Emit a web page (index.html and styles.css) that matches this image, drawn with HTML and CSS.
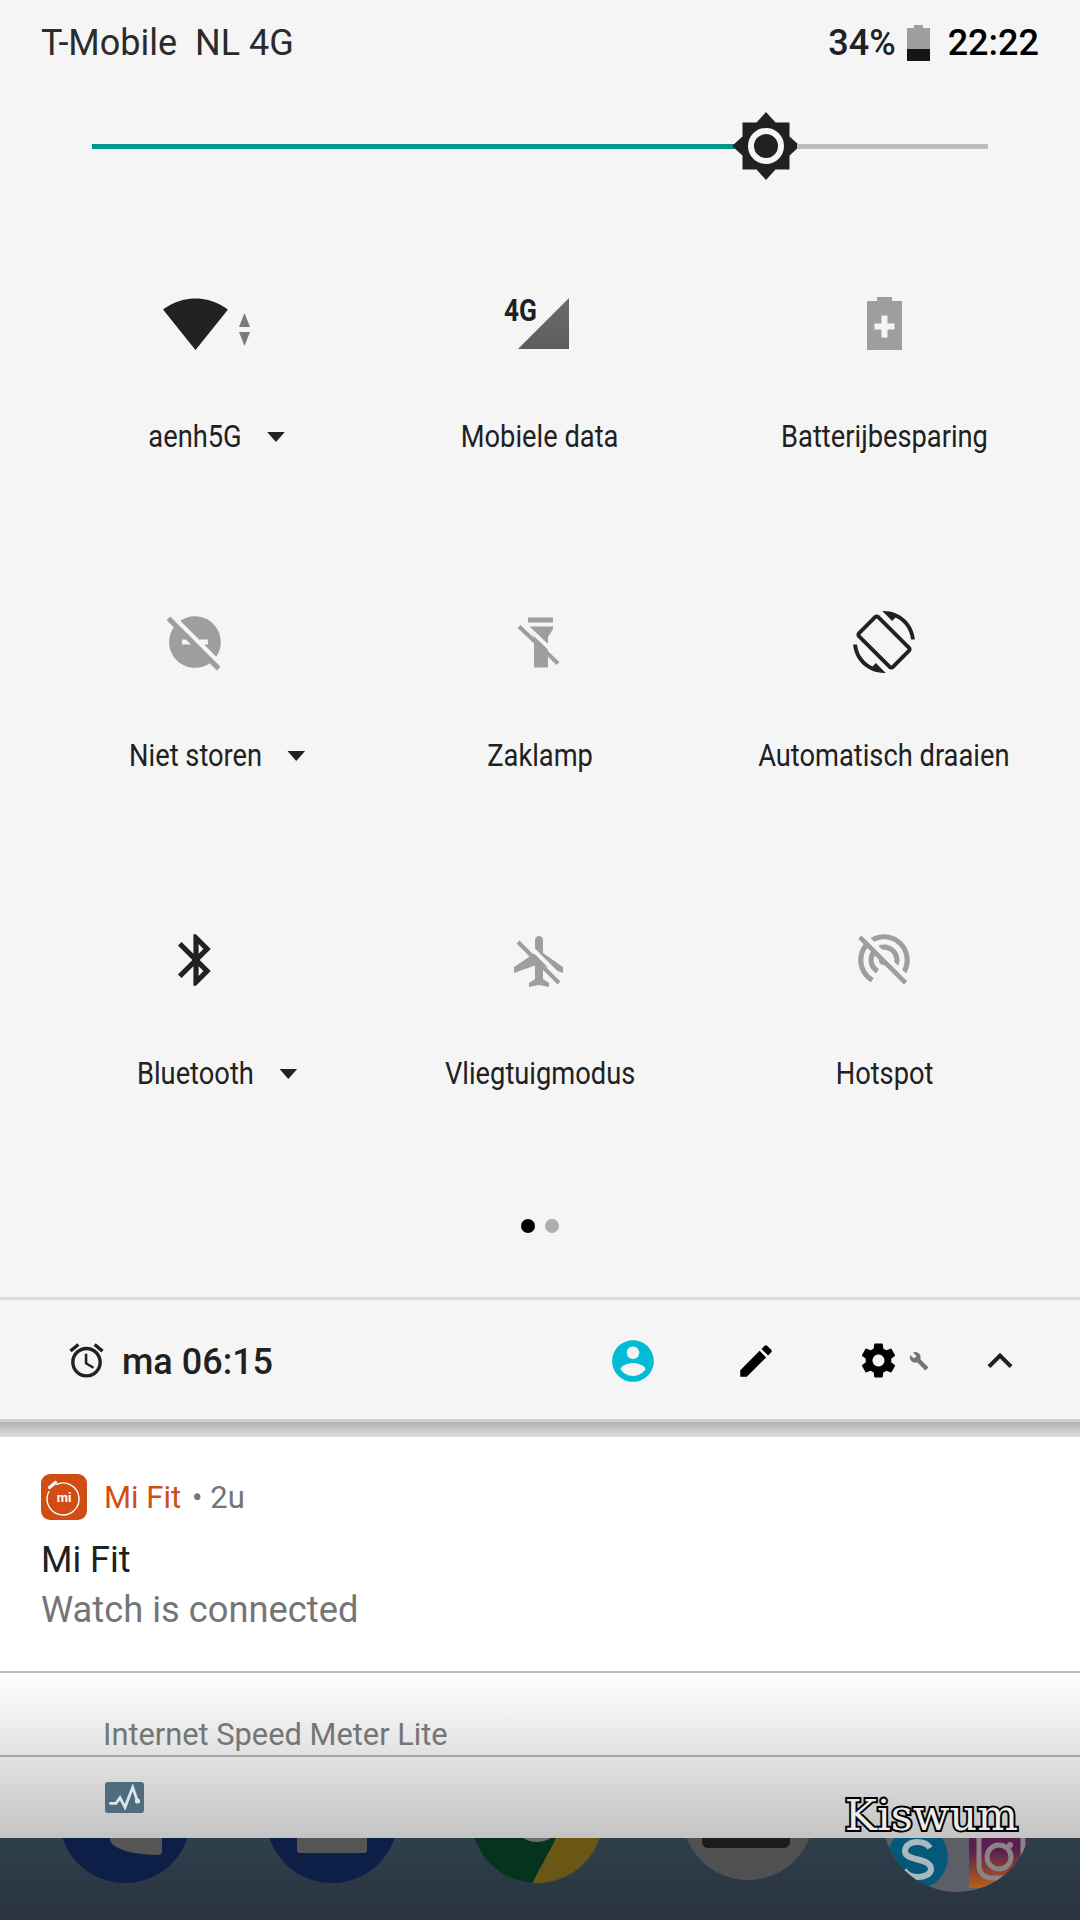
FILE: index.html
```html
<!DOCTYPE html>
<html lang="nl">
<head>
    <meta charset="UTF-8">
    <meta name="viewport" content="width=device-width, initial-scale=1.0">
    <title>Snelle instellingen</title>
    <link rel="stylesheet" href="styles.css">
</head>
<body>
    <div class="panel">
        <div class="status-bar">
            <span class="carrier">T-Mobile&nbsp; NL 4G</span>
            <span class="battery-level">34%</span>
            <svg class="battery-icon" viewBox="0 0 23 36">
                <path d="M7 0h9v3h7v21H0V3h7z" fill="#9e9e9e"/>
                <rect y="24" width="23" height="12" fill="#161616"/>
            </svg>
            <span class="clock">22:22</span>
        </div>

        <div class="slider">
            <div class="slider-fill"></div>
            <svg class="slider-thumb" viewBox="0 0 68 68">
                <path d="M34 0l9.500 10.500H57.500V24.500L68 34 57.500 43.500V57.500H43.500L34 68 24.500 57.500H10.500V43.500L0 34 10.500 24.500V10.500H24.500z" fill="#212121"/>
                <circle cx="34" cy="34" r="15" fill="#212121" stroke="#f5f5f5" stroke-width="6"/>
            </svg>
            <div class="slider-rest"></div>
        </div>

        <div class="tiles">
            <div class="tile">
                <div class="tile-icon">
                    <svg class="wifi" viewBox="0 0 24 24"><path d="M12.010 21.490L23.640 7c-.45-.34-4.930-4-11.640-4C5.280 3 .81 6.660.36 7l11.630 14.490.01.01.01-.01z" fill="#212121"/></svg>
                    <svg class="wifi-arrows" viewBox="0 0 11 33"><path d="M5.500 0L11 14H0z" fill="#7a7a7a"/><path d="M0 19h11L5.500 33z" fill="#7a7a7a"/></svg>
                </div>
                <div class="tile-label has-menu">aenh5G</div>
            </div>
            <div class="tile">
                <div class="tile-icon">
                    <svg class="signal" viewBox="0 0 51 51"><defs><linearGradient id="signalFill" x1="0" y1="0" x2="0" y2="1"><stop offset="0" stop-color="#6b6b6b"/><stop offset="1" stop-color="#5c5c5c"/></linearGradient></defs><path d="M51 0V51H0z" fill="url(#signalFill)"/></svg>
                    <span class="signal-text">4G</span>
                </div>
                <div class="tile-label">Mobiele data</div>
            </div>
            <div class="tile">
                <div class="tile-icon">
                    <svg class="saver" viewBox="0 0 35 53"><path d="M10 0h15v4h10v49H0V4h10z" fill="#9e9e9e"/><path d="M14.500 18.500h6v8h7v6h-7v8h-6v-8h-7v-6h7z" fill="#f5f5f5"/></svg>
                </div>
                <div class="tile-label">Batterijbesparing</div>
            </div>

            <div class="tile">
                <div class="tile-icon">
                    <svg class="icon-62" viewBox="0 0 24 24"><path d="M17 11v2h-1.460l4.680 4.680C21.340 16.070 22 14.110 22 12c0-5.520-4.480-10-10-10-2.110 0-4.070.66-5.680 1.780L13.540 11H17zM2.410 2.130L1 3.540l2.780 2.780C2.660 7.930 2 9.890 2 12c0 5.520 4.480 10 10 10 2.110 0 4.070-.66 5.680-1.780L20.460 23l1.410-1.410L2.410 2.130zM7 13v-2h1.460l2 2H7z" fill="#9e9e9e"/></svg>
                </div>
                <div class="tile-label has-menu">Niet storen</div>
            </div>
            <div class="tile">
                <div class="tile-icon">
                    <svg class="icon-62" viewBox="0 0 62 62">
                        <path d="M19 6.500h25v5H19zM19 15.500h25V18l-5 8v30.500H25V26l-6-8z" fill="#9e9e9e"/>
                        <path d="M14 12l39 37" stroke="#f5f5f5" stroke-width="4"/>
                        <path d="M10 15.500l39 37" stroke="#9e9e9e" stroke-width="4"/>
                    </svg>
                </div>
                <div class="tile-label">Zaklamp</div>
            </div>
            <div class="tile">
                <div class="tile-icon">
                    <svg class="icon-62" viewBox="0 0 24 24"><path d="M16.480 2.520c3.270 1.550 5.610 4.720 5.970 8.480h1.500C23.440 4.840 18.290 0 12 0l-.66.03 3.810 3.810 1.330-1.320zm-6.250-.77c-.59-.59-1.540-.59-2.120 0L1.750 8.110c-.59.59-.59 1.540 0 2.120l12.020 12.020c.59.59 1.540.59 2.120 0l6.360-6.360c.59-.59.59-1.540 0-2.120L10.230 1.750zm4.600 19.440L2.810 9.170l6.360-6.360 12.020 12.020-6.360 6.360zm-7.310.29C4.250 19.940 1.910 16.760 1.550 13H.05C.56 19.160 5.710 24 12 24l.66-.03-3.810-3.810-1.330 1.320z" fill="#212121"/></svg>
                </div>
                <div class="tile-label">Automatisch draaien</div>
            </div>

            <div class="tile">
                <div class="tile-icon">
                    <svg class="icon-62 bluetooth" viewBox="0 0 24 24"><path d="M17.710 7.710L12 2h-1v7.590L6.410 5 5 6.410 10.590 12 5 17.590 6.410 19 11 14.410V22h1l5.710-5.710-4.300-4.290 4.300-4.290zM13 5.830l1.880 1.880L13 9.590V5.830zm1.880 10.460L13 18.170v-3.760l1.880 1.880z" fill="#212121"/></svg>
                </div>
                <div class="tile-label has-menu">Bluetooth</div>
            </div>
            <div class="tile">
                <div class="tile-icon">
                    <svg class="icon-62" viewBox="0 0 62 62">
                        <path d="M30 7c-2.200 0-4 1.800-4 4v13L5 38v6l21-7.500V50l-6 4v4l10-2 10 2v-4l-6-4V36.500L54 44v-6L34 24V11c0-2.200-1.800-4-4-4z" fill="#9e9e9e"/>
                        <path d="M13 9.500l41 41" stroke="#f5f5f5" stroke-width="4"/>
                        <path d="M9 13l41 41" stroke="#9e9e9e" stroke-width="4"/>
                    </svg>
                </div>
                <div class="tile-label">Vliegtuigmodus</div>
            </div>
            <div class="tile">
                <div class="tile-icon">
                    <svg class="icon-62" viewBox="0 0 24 24"><path d="M17.560 14.240c.28-.69.44-1.450.44-2.240 0-3.310-2.690-6-6-6-.79 0-1.550.16-2.240.44l1.620 1.620c.2-.03.41-.06.62-.06 2.210 0 4 1.790 4 4 0 .21-.02.42-.05.63l1.610 1.610zM12 4c4.420 0 8 3.580 8 8 0 1.350-.35 2.620-.95 3.740l1.470 1.470C21.460 15.690 22 13.910 22 12c0-5.520-4.480-10-10-10-1.910 0-3.690.55-5.210 1.470l1.460 1.460C9.370 4.340 10.650 4 12 4zM3.270 2.500L2 3.770l2.100 2.100C2.790 7.570 2 9.690 2 12c0 3.700 2.010 6.920 4.990 8.650l1-1.730C5.610 17.530 4 14.960 4 12c0-1.760.57-3.380 1.530-4.690l1.430 1.440C6.360 9.680 6 10.800 6 12c0 2.220 1.210 4.150 3 5.190l1-1.740c-1.190-.7-2-1.970-2-3.450 0-.65.17-1.250.44-1.790l1.580 1.580L10 12c0 1.100.9 2 2 2l.21-.02.01.01 7.510 7.510L21 20.230 4.270 3.500l-1-1z" fill="#9e9e9e"/></svg>
                </div>
                <div class="tile-label">Hotspot</div>
            </div>
        </div>

        <div class="page-dots">
            <span class="dot active"></span>
            <span class="dot"></span>
        </div>

        <div class="footer">
            <svg class="alarm-icon" viewBox="0 0 24 24"><path d="M22 5.720l-4.600-3.860-1.290 1.530 4.600 3.860L22 5.720zM7.880 3.390L6.600 1.860 2 5.710l1.290 1.530 4.590-3.850zM12.500 8H11v6l4.750 2.850.75-1.230-4-2.370V8zM12 4c-4.970 0-9 4.030-9 9s4.020 9 9 9c4.970 0 9-4.030 9-9s-4.030-9-9-9zm0 16c-3.870 0-7-3.130-7-7s3.130-7 7-7 7 3.130 7 7-3.130 7-7 7z" fill="#212121"/></svg>
            <span class="alarm-time">ma 06:15</span>
            <svg class="user-icon" viewBox="0 0 24 24"><path d="M12 2C6.480 2 2 6.480 2 12s4.480 10 10 10 10-4.480 10-10S17.520 2 12 2zm0 3c1.660 0 3 1.340 3 3s-1.340 3-3 3-3-1.340-3-3 1.340-3 3-3zm0 14.200c-2.500 0-4.710-1.280-6-3.220.03-1.990 4-3.080 6-3.080 1.990 0 5.970 1.090 6 3.080-1.290 1.940-3.500 3.220-6 3.220z" fill="#00bcd4"/></svg>
            <svg class="edit-icon" viewBox="0 0 24 24"><path d="M3 17.250V21h3.750L17.810 9.940l-3.750-3.750L3 17.250zM20.710 7.040c.39-.39.39-1.020 0-1.410l-2.340-2.340c-.39-.39-1.020-.39-1.410 0l-1.830 1.830 3.750 3.750 1.830-1.830z" fill="#000"/></svg>
            <svg class="gear-icon" viewBox="0 0 24 24"><path d="M19.430 12.980c.04-.32.07-.64.07-.98s-.03-.66-.07-.98l2.110-1.650c.19-.15.24-.42.12-.64l-2-3.460c-.12-.22-.39-.3-.61-.22l-2.490 1c-.52-.4-1.080-.73-1.690-.98l-.38-2.650C14.460 2.180 14.250 2 14 2h-4c-.25 0-.46.18-.49.42l-.38 2.650c-.61.25-1.170.59-1.690.98l-2.490-1c-.23-.09-.49 0-.61.22l-2 3.460c-.13.22-.07.49.12.64l2.110 1.650c-.04.32-.07.65-.07.98s.03.66.07.98l-2.110 1.650c-.19.15-.24.42-.12.64l2 3.460c.12.22.39.3.61.22l2.490-1c.52.4 1.080.73 1.690.98l.38 2.650c.03.24.24.42.49.42h4c.25 0 .46-.18.49-.42l.38-2.650c.61-.25 1.170-.59 1.690-.98l2.490 1c.23.09.49 0 .61-.22l2-3.460c.12-.22.07-.49-.12-.64l-2.110-1.650zM12 15.500c-1.930 0-3.500-1.570-3.500-3.500s1.570-3.500 3.500-3.500 3.500 1.570 3.500 3.500-1.570 3.500-3.500 3.500z" fill="#000"/></svg>
            <svg class="wrench-icon" viewBox="0 0 24 24"><path d="M22.700 19l-9.100-9.100c.9-2.300.4-5-1.500-6.900-2-2-5-2.400-7.400-1.300L9 6 6 9 1.600 4.700C.4 7.100.9 10.100 2.900 12.100c1.900 1.900 4.600 2.400 6.900 1.500l9.100 9.100c.4.4 1 .4 1.400 0l2.300-2.300c.5-.4.5-1.100.1-1.400z" fill="#757575"/></svg>
            <svg class="chevron-icon" viewBox="0 0 24 24"><path d="M12 8l-6 6 1.410 1.410L12 10.830l4.590 4.580L18 14z" fill="#212121"/></svg>
        </div>
        <div class="footer-shadow"></div>

        <div class="notification">
            <div class="notification-head">
                <svg class="app-icon" viewBox="0 0 46 46">
                    <rect width="46" height="46" rx="9" fill="#d04e14"/>
                    <path d="M15.300 10.500A16 16 0 1 1 8.200 17" fill="none" stroke="#fff" stroke-width="1.400"/>
                    <path d="M8.500 13.500l6-5" stroke="#fff" stroke-width="3.200" stroke-linecap="round"/>
                    <text class="app-icon-text" x="23" y="27.500" text-anchor="middle">mi</text>
                </svg>
                <span class="app-name">Mi Fit</span>
                <span class="app-time">• 2u</span>
            </div>
            <div class="notification-title">Mi Fit</div>
            <div class="notification-text">Watch is connected</div>
        </div>

        <div class="speed-meter">
            <div class="speed-title">Internet Speed Meter Lite</div>
            <div class="speed-bottom">
                <svg class="speed-icon" viewBox="0 0 40 33">
                    <rect x="1" y="1" width="39" height="31" rx="3" fill="#4d6d7e"/>
                    <path d="M5.300 22.300H12l4-5.600 5 9.600 7.700-20 4.600 13.400" fill="none" stroke="#dfe6ea" stroke-width="2.800"/>
                    <circle cx="33.500" cy="20" r="2.600" fill="#dfe6ea"/>
                </svg>
                <span class="watermark">Kiswum</span>
            </div>
        </div>
    </div>

    <div class="wallpaper">
        <div class="app-circle phone"><div class="phone-shape"></div></div>
        <div class="app-circle messages"><div class="messages-shape"></div></div>
        <div class="app-circle chrome"><div class="chrome-dot"></div></div>
        <div class="app-circle camera"><div class="camera-shape"></div></div>
        <svg class="folder" viewBox="0 0 148 148">
            <defs>
                <clipPath id="folderClip"><circle cx="74" cy="74" r="74"/></clipPath>
                <linearGradient id="instaFill" x1="0" y1="0" x2="0" y2="1">
                    <stop offset="0.55" stop-color="#5a1f4e"/>
                    <stop offset="1" stop-color="#b4601a"/>
                </linearGradient>
            </defs>
            <g clip-path="url(#folderClip)">
                <rect width="148" height="148" fill="#5c6066"/>
                <ellipse cx="35" cy="113" rx="30" ry="31" fill="#04587a"/>
                <path d="M47 104c-3-5-8-6-13-6-7 0-12 4-12 9 0 11 26 6 26 18 0 5-6 8-13 8-6 0-11-2-14-7" fill="none" stroke="#aab9c0" stroke-width="6"/>
                <rect x="86" y="60" width="62" height="84" fill="url(#instaFill)"/>
                <rect x="96" y="70" width="44" height="64" rx="12" fill="none" stroke="#8b8486" stroke-width="5"/>
                <circle cx="116" cy="113" r="12" fill="none" stroke="#8b8486" stroke-width="5"/>
                <circle cx="127" cy="101" r="3" fill="#8b8486"/>
            </g>
        </svg>
    </div>
</body>
</html>
```

FILE: styles.css
```css
* {
    box-sizing: border-box;
}

html, body {
    margin: 0;
    padding: 0;
}

body {
    width: 1080px;
    height: 1920px;
    overflow: hidden;
    font-family: Roboto, "Noto Sans", sans-serif;
    background-color: #2a3643;
    color: #212121;
}

.panel {
    background-color: #f5f5f5;
    height: 1838px;
}

/* status bar */
.status-bar {
    display: flex;
    align-items: center;
    height: 84px;
    padding: 2px 41px 0 41px;
    font-size: 36px;
}

.carrier {
    flex: 1;
    color: #2b2b2b;
}

.battery-level {
    font-weight: 500;
    color: #212121;
}

.battery-icon {
    width: 23px;
    height: 36px;
    margin: 0 18px 0 11px;
}

.clock {
    font-weight: 500;
    color: #000;
}

/* brightness */
.slider {
    display: flex;
    align-items: center;
    margin: 28px 92px 0;
    height: 68px;
}

.slider-fill {
    width: 643px;
    height: 5px;
    background-color: #009688;
}

.slider-thumb {
    flex: none;
    width: 68px;
    height: 68px;
    margin-left: -3px;
}

.slider-rest {
    flex: 1;
    height: 5px;
    margin-left: -3px;
    background-color: #bdbdbd;
}

/* tiles */
.tiles {
    display: grid;
    grid-template-columns: repeat(3, 344.5px);
    grid-auto-rows: 318.5px;
    padding-left: 23px;
    padding-top: 1px;
}

.tile {
    display: flex;
    flex-direction: column;
    align-items: center;
    padding-top: 110px;
}

.tile-icon {
    position: relative;
    display: flex;
    align-items: center;
    justify-content: center;
    width: 100px;
    height: 64px;
}

.icon-62 {
    width: 62px;
    height: 62px;
}

.bluetooth {
    margin-left: 2px;
}

.wifi {
    width: 67px;
    height: 67px;
}

.wifi-arrows {
    position: absolute;
    left: 94px;
    top: 22px;
    width: 11px;
    height: 33px;
}

.signal {
    width: 51px;
    height: 51px;
    margin-left: 7px;
}

.signal-text {
    position: absolute;
    left: 14px;
    top: 3px;
    font-size: 32px;
    line-height: 32px;
    font-weight: 700;
    transform: scaleX(0.82);
    transform-origin: left center;
    color: #212121;
}

.saver {
    width: 35px;
    height: 53px;
}

/* the labels on the phone are narrower than plain Roboto */
.tile-label {
    position: relative;
    margin-top: 62px;
    font-size: 31px;
    line-height: 40px;
    white-space: nowrap;
    color: #212121;
    transform: scaleX(0.88);
}

.has-menu::after {
    content: "";
    position: absolute;
    left: 100%;
    top: 15px;
    margin-left: 29px;
    border-left: 10px solid transparent;
    border-right: 10px solid transparent;
    border-top: 10px solid #212121;
}

/* page indicator */
.page-dots {
    display: flex;
    justify-content: center;
    gap: 10px;
    margin-top: 82px;
}

.dot {
    width: 14px;
    height: 14px;
    border-radius: 50%;
    background-color: #aeaeae;
}

.dot.active {
    background-color: #000;
}

/* footer row */
.footer {
    display: flex;
    align-items: center;
    height: 125px;
    margin-top: 64px;
    padding: 3px 0 0 66px;
    border-top: 3px solid #dcdcdc;
    border-bottom: 3px solid #cfcfcf;
}

.alarm-icon {
    width: 41px;
    height: 41px;
}

.alarm-time {
    flex: 1;
    margin-left: 15px;
    padding-top: 3px;
    font-size: 36px;
    font-weight: 500;
}

.user-icon {
    width: 50px;
    height: 50px;
}

.edit-icon {
    width: 42px;
    height: 42px;
    margin-left: 77px;
}

.gear-icon {
    width: 41px;
    height: 41px;
    margin-left: 81px;
}

.wrench-icon {
    width: 20px;
    height: 20px;
    margin-left: 10px;
}

.chevron-icon {
    width: 50px;
    height: 50px;
    margin-left: 46px;
    margin-right: 55px;
}

.footer-shadow {
    height: 15px;
    background: linear-gradient(#b2b2b2, #dedede);
}

/* notification */
.notification {
    height: 236px;
    padding: 37px 41px 0;
    background-color: #fff;
    border-bottom: 2px solid #bdbdbd;
}

.notification-head {
    display: flex;
    align-items: center;
    height: 46px;
    font-size: 31px;
    line-height: 46px;
}

.app-icon {
    width: 46px;
    height: 46px;
    margin-right: 17px;
}

.app-icon-text {
    font-family: Roboto, sans-serif;
    font-size: 13px;
    font-weight: 700;
    fill: #fff;
}

.app-name {
    padding-top: 3px;
    color: #d04e14;
}

.app-time {
    margin-left: 11px;
    padding-top: 3px;
    color: #757575;
}

.notification-title {
    margin-top: 17px;
    font-size: 36px;
    line-height: 46px;
    color: #212121;
}

.notification-text {
    font-size: 36.300px;
    line-height: 54px;
    color: #757575;
}

/* the half hidden notification below */
.speed-meter {
    height: 165px;
    background: linear-gradient(#fff, #c4c4c4);
}

.speed-title {
    height: 84px;
    padding: 44px 0 0 103px;
    border-bottom: 2px solid #a6a6a6;
    font-size: 30.800px;
    line-height: 36px;
    color: #757575;
}

.speed-bottom {
    display: flex;
    padding: 24px 62px 0 104px;
}

.speed-icon {
    width: 40px;
    height: 33px;
}

.watermark {
    margin-left: auto;
    margin-top: 14px;
    font-family: "DejaVu Serif", serif;
    font-size: 43px;
    line-height: 40px;
    color: #ececec;
    -webkit-text-stroke: 4px #000;
    paint-order: stroke fill;
}

/* blurred launcher behind the panel */
.wallpaper {
    display: flex;
    height: 82px;
    overflow: hidden;
    padding-left: 59px;
    background: linear-gradient(#2e404c, #29333f);
}

.app-circle {
    position: relative;
    flex: none;
    width: 132px;
    height: 132px;
    margin-top: -87px;
    border-radius: 50%;
    overflow: hidden;
}

.phone, .messages {
    background-color: #0d1f47;
}

.phone {
    margin-right: 75px;
}

.phone-shape {
    position: absolute;
    left: 51px;
    top: 60px;
    width: 52px;
    height: 44px;
    background-color: #555;
    border-radius: 0 0 4px 52px / 0 0 4px 17px;
}

.messages {
    margin-right: 73px;
}

.messages-shape {
    position: absolute;
    left: 31px;
    top: 55px;
    width: 70px;
    height: 47px;
    border-radius: 3px;
    background-color: #555;
}

.chrome {
    margin-right: 79px;
    background: linear-gradient(118deg, #06331e 65%, #6a5716 65%);
}

.chrome-dot {
    position: absolute;
    left: 41px;
    top: 41px;
    width: 50px;
    height: 50px;
    border-radius: 50%;
    border: 7px solid #6d6d6d;
    background-color: #2a4f80;
}

.camera {
    margin-right: 69px;
    margin-top: -90px;
    background-color: #505050;
}

.camera-shape {
    position: absolute;
    left: 20px;
    top: 55px;
    width: 88px;
    height: 45px;
    border-radius: 6px;
    background-color: #1b1b1b;
}

.folder {
    flex: none;
    width: 148px;
    height: 148px;
    margin-top: -94px;
}
```
